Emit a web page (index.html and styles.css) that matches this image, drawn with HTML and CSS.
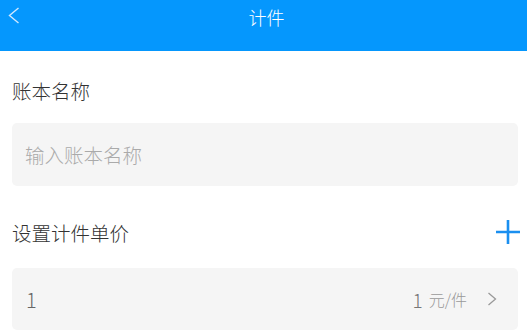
FILE: index.html
```html
<!DOCTYPE html>
<html lang="zh">
<head>
<meta charset="utf-8">
<link rel="stylesheet" href="styles.css">
</head>
<body>
<header class="topbar">
  <div class="bar-row">
    <svg class="back" width="12" height="18" viewBox="0 0 12 18"><polyline points="10.5,1 1.5,8.5 10.5,16" fill="none" stroke="#cfe8ff" stroke-width="1.4"/></svg>
    <span class="title">计件</span>
  </div>
</header>
<main class="content">
  <div class="label-row first">账本名称</div>
  <div class="field"><span class="placeholder">输入账本名称</span></div>
  <div class="label-row second">
    <span>设置计件单价</span>
    <svg class="plus" width="26" height="26" viewBox="0 0 26 26"><path d="M13 1v24M1 13h24" stroke="#1a8ff0" stroke-width="2.6" fill="none"/></svg>
  </div>
  <div class="field price">
    <span class="count">1</span>
    <span class="right"><span class="num">1</span><span class="unit">元/件</span><svg class="chev" width="10" height="14" viewBox="0 0 10 14"><polyline points="1.5,1 8.5,7 1.5,13" fill="none" stroke="#999" stroke-width="1.3"/></svg></span>
  </div>
</main>
</body>
</html>
```
FILE: styles.css
```css
* { box-sizing: border-box; }
html, body { margin: 0; padding: 0; background: #fff; }
body { font-family: "Noto Sans CJK SC", "Noto Sans", sans-serif; font-weight: 300; width: 527px; overflow: hidden; }
.topbar { height: 51px; background: #0597fd; }
.bar-row { height: 34px; display: flex; align-items: center; justify-content: center; position: relative; }
.back { position: absolute; left: 8px; top: 7px; }
.title { color: #fff; font-size: 18px; line-height: 32px; padding-left: 6px; }
.content { padding: 0 9px 0 12px; }
.label-row { height: 40px; display: flex; align-items: center; justify-content: space-between; font-size: 19.5px; color: #333; }
.label-row.first { margin-top: 19px; margin-bottom: 13px; }
.label-row.second { margin-top: 26px; margin-bottom: 16px; }
.plus { margin-right: -3px; }
.field { height: 63px; background: #f5f5f5; border-radius: 5px; display: flex; align-items: center; padding: 0 13px; width: 506px; }
.placeholder { color: #aaa; font-size: 19.5px; }
.price { height: 62px; justify-content: space-between; padding: 0 21px 0 14px; }
.count { color: #666; font-size: 20px; }
.right { display: flex; align-items: center; color: #999; }
.num { color: #777; font-size: 19px; margin-right: 6px; }
.unit { font-size: 16px; margin-right: 20px; }
.chev { display: block; }
```
